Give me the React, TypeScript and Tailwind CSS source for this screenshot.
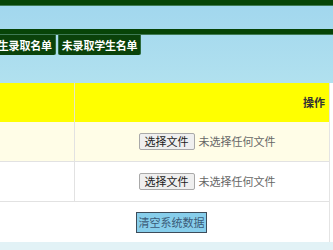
const cjk = "font-['Noto_Sans_CJK_SC','Noto_Sans',sans-serif]";

function FileField() {
  return (
    <div className="flex items-center gap-[4px]">
      <span className="h-[17px] px-[5px] flex items-center border border-[#a9a9a9] rounded-[2px] bg-[#efefef] text-[11px] text-[#222] leading-none">
        选择文件
      </span>
      <span className="text-[11px] text-[#666] leading-none">未选择任何文件</span>
    </div>
  );
}

export default function App() {
  const rows = [
    { id: 1, bg: "bg-[#fffde7]" },
    { id: 2, bg: "bg-white" },
  ];

  return (
    <div className={`w-[333px] h-[250px] overflow-hidden bg-white ${cjk}`}>
      {/* top bar */}
      <div className="h-[6px] bg-[#074407] border-b border-[#3f7a55]" />

      {/* header band */}
      <div className="h-[77px] bg-gradient-to-b from-[#a2d7ee] to-[#b1e1ef] flex flex-col">
        <div className="h-[23px]" />
        <div className="h-[6px] bg-[#074407] border-b border-[#3f7a55]" />
        <div className="flex gap-[2px] ml-[-17px]">
          {["新生录取名单", "未录取学生名单"].map((t) => (
            <span
              key={t}
              className="h-[20px] px-[3px] flex items-center bg-[#0a420a] text-white text-[11px] font-bold tracking-[-0.2px] rounded-b-[2px] border-x border-[#2d6a3d]"
            >
              {t}
            </span>
          ))}
        </div>
      </div>

      {/* table */}
      <div className="w-[330px] border-r border-[#e4e4e4]">
        <div className="grid grid-cols-[75px_1fr] h-[39px] bg-[#ffff00]">
          <div className="border-r border-[#e8e8c0]" />
          <div className="flex items-center justify-end pr-[4px] text-[11px] font-bold text-[#333]">
            操作
          </div>
        </div>
        {rows.map((r) => (
          <div
            key={r.id}
            className={`grid grid-cols-[75px_1fr] h-[40px] border-b border-[#e2e2e2] ${r.bg}`}
          >
            <div className="border-r border-[#e2e2e2]" />
            <div className="flex items-center justify-center pl-[10px]">
              <FileField />
            </div>
          </div>
        ))}
        <div className="h-[40px] flex items-center justify-center pl-[14px]">
          <button className="h-[21px] w-[71px] bg-[#87ceeb] border-[1.5px] border-[#3d4c5a] text-[11px] text-[#3b5b78] leading-none">
            清空系统数据
          </button>
        </div>
      </div>
      <div className="h-[8px] bg-[#e2f2f6]" />
    </div>
  );
}
